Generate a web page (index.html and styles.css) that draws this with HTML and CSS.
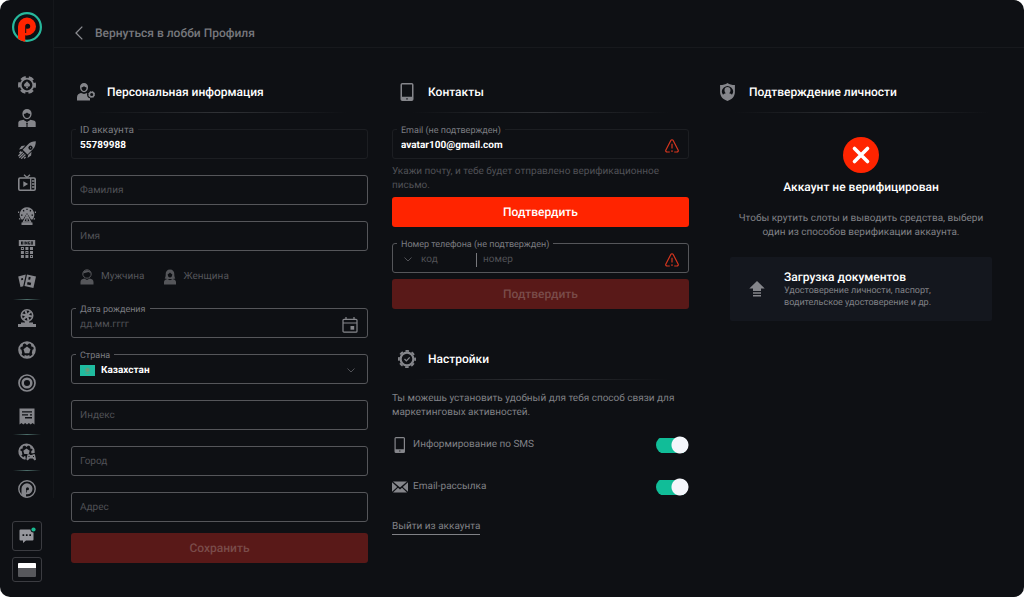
FILE: index.html
```html
<!DOCTYPE html>
<html lang="ru">
<head>
<meta charset="utf-8">
<meta name="viewport" content="width=device-width, initial-scale=1">
<title>Профиль</title>
<link rel="stylesheet" href="styles.css">
</head>
<body>
<div class="app">
  <aside class="sidebar">
    <div class="sidebar-top">
      <a class="logo" href="#" aria-label="Главная">
        <svg viewBox="0 0 30 30" width="30" height="30"><circle cx="15" cy="15" r="13.900" fill="#0e1014" stroke="#27b89c" stroke-width="2.200"/><path fill="#ff2400" fill-rule="evenodd" d="M6 14.500a9 9 0 1 1 9 9q-1 0-1.800-.2V29.800A14.800 14.800 0 0 1 6 26.800zM13.200 21V14.300a2.500 2.500 0 1 1 2.500 2.500q-.8 0-1.500-.4V21z"/></svg>
      </a>
      <nav class="nav" aria-label="Разделы">
        <a href="#" aria-label="Казино"><svg viewBox="0 0 18 18"><circle cx="9" cy="9" r="6.300" class="line" stroke-width="1.800"/><circle cx="9" cy="9" r="7.600" class="line" stroke-width="2.800" stroke-dasharray="5 2.960" stroke-dashoffset="2.500"/><path d="M9 5.200c1 1.400 3 2.300 3 4 0 1.500-1.700 1.900-2.500.9l.6 2.100H7.900l.6-2.100c-.8 1-2.500.6-2.500-.9 0-1.700 2-2.600 3-4z"/></svg></a>
        <a href="#" aria-label="Live-дилеры"><svg viewBox="0 0 18 18"><path fill-rule="evenodd" d="M9 0a4.600 4.600 0 0 1 4.600 4.600C13.600 7.800 11.600 10.300 9 10.300S4.400 7.800 4.400 4.600A4.600 4.600 0 0 1 9 0zM5.800 4.900C6 7.300 7.300 9 9 9s3-1.700 3.200-4.100c-1.300 0-2.400-.5-3.200-1.300-.8.800-1.900 1.300-3.200 1.300z"/><path d="M.3 18v-4.200c0-1.200 1-2 2-2.300l3.300-.8L8.200 13v5zM17.700 18v-4.200c0-1.200-1-2-2-2.300l-3.300-.8L9.800 13v5z"/><path d="M6.600 11.800 9 13l2.400-1.200v3L9 13.600l-2.400 1.200z"/><path d="M8.700 15h.6v3h-.6z"/></svg></a>
        <a href="#" aria-label="Crash-игры"><svg viewBox="0 0 18 18"><path fill-rule="evenodd" d="M17.800.2c.1 3.300-.9 6-3 8.100L9.500 13.500 4.700 8.700 9.900 3.400C12 1.300 14.600.2 17.800.2zM11 5.200a2.100 2.100 0 1 0 3 3 2.100 2.100 0 0 0-3-3z"/><path d="M7.300 4.600 3.500 5 1 8.500l3.200-.7zM13.500 10.800l-.4 3.700L9.500 17l.8-3.300zM12 6.200h1v1h-1z"/><path class="line" stroke-width="1.300" d="m4.600 10.800-4.200 4.300M6 12.100l-4.700 4.700M7.400 13.500l-4.200 4.200M3 10.500l-1.500 1.500M7.600 16l-1.500 1.500"/></svg></a>
        <a href="#" aria-label="TV-игры"><svg viewBox="0 0 18 18"><rect x=".8" y="4" width="16.400" height="12.200" rx="1.200" class="line" stroke-width="1.600"/><path class="line" stroke-width="1.300" d="M6 .8 9 3.500l3-2.700M12.700 4v12M14 7h2.500M14 10h2.500M14 13h2.500"/><path d="m5.300 7.200 4.800 2.900-4.800 2.900z"/></svg></a>
        <a href="#" aria-label="Колесо"><svg viewBox="0 0 18 18"><path fill-rule="evenodd" d="M9 .3a7.300 7.300 0 0 1 5.200 12.400l-1.400-.4L9 6l-3.800 6.300-1.400.4A7.300 7.300 0 0 1 9 .3zM8.400 1.700v1.400h1.200V1.700zM4.700 3.500l.9 1.300 1-.7-.9-1.300zM12.300 2.800l-.9 1.300 1 .7.900-1.300zM3 7.500v1.200h1.500V7.500zM13.500 7.500v1.200H15V7.500z"/><path class="line" stroke-width="1.400" d="M9 7.800 5.400 15h7.200zM9 10v4"/><path d="M3.500 15.500h11V18h-11zM0 4.500h1.200v1.400H0zM16.800 4.500H18v1.400h-1.200zM.8 11.500l1.200-.5.6 1.200-1.200.5zM17.200 11.500 16 11l-.6 1.200 1.200.5z"/></svg></a>
        <a href="#" aria-label="Бинго"><svg viewBox="0 0 18 18"><path fill-rule="evenodd" d="M.8 0h16.400v5.900H.8zM3 1.600v2.800h1.900V3.300h-.6v-.6h.6V1.600zM5.700 1.600v2.800h.8V1.600zM7.200 1.600v2.800h.7V2.900l.9 1.500h.7V1.600h-.7V3l-.8-1.400zM10.200 1.600v2.800h2V3h-.8v.7H11V2.300h1.200v-.7zM12.900 1.600v2.800H15V1.600zM13.600 2.300h.7v1.400h-.7z"/><path fill-rule="evenodd" d="M2.900 7h3v3h-3zM7.400 7h3v3h-3zM12 7h3v3h-3zM2.900 11h3v3h-3zM7.400 11h3v3h-3zM12 11h3v3h-3zM2.900 15h3v3h-3zM7.400 15h3v3h-3zM12 15h3v3h-3zM3.800 7.900v1.200H5V7.900zM8.300 11.900v1.200h1.200v-1.200zM12.900 15.900v1.200h1.200v-1.200z"/></svg></a>
        <a href="#" aria-label="Карты"><svg viewBox="0 0 18 18"><path fill-rule="evenodd" d="m.2 4.500 7.600-2-2.600 11.700-2.700.7zM3 6.400l.4 1.800 1.800-.5-.4-1.800z"/><path fill-rule="evenodd" d="m9 2.500 9 1.900-2.600 11.500-8.900-1.900zM10.800 4.800l-.6 2.600 1.900.4.600-2.600zM9.600 9.900 9 12.500l3.600.8.600-2.600z"/></svg></a>
        <span class="sep"></span>
        <a href="#" aria-label="Рулетка"><svg viewBox="0 0 18 18"><circle cx="9" cy="6.500" r="5.700" class="line" stroke-width="1.600"/><path class="line" stroke-width="2" d="m9 6.500-1.500-5M9 6.500l3.500-3.800M9 6.500l5 1M9 6.500l1.500 5M9 6.500l-3.500 3.800M9 6.500l-5-1"/><path d="M7 12h4v1.500h4V15h3v3H0v-3h3v-1.500h4z"/></svg></a>
        <a href="#" aria-label="Спорт"><svg viewBox="0 0 18 18"><circle cx="9" cy="9" r="7.900" class="line" stroke-width="1.800"/><path d="m9 5.600 3.500 2.600-1.300 4.100H6.800L5.500 8.200zM6 1.500h6L9 4.200zM1 7.400l2.500 1.400.7 3.500L2.500 14zM17 7.400l-2.500 1.400-.7 3.500 1.700 1.700zM6 17l.7-3 2.300.7 2.300-.7.7 3zM3 3l2-.4-.3 3L2 6zM15 3l-2-.4.3 3L16 6z"/></svg></a>
        <a href="#" aria-label="Live-ставки"><svg viewBox="0 0 18 18"><circle cx="9" cy="9" r="8" class="line" stroke-width="1.700"/><circle cx="9" cy="9" r="4.300" class="line" stroke-width="2.500"/></svg></a>
        <a href="#" aria-label="Результаты"><svg viewBox="0 0 18 18"><path fill-rule="evenodd" d="M1.500 1.600h15v15.800l-2-1.300-1.800 1.300-1.800-1.300L9 17.400l-1.800-1.300-1.900 1.300-1.800-1.300-2 1.300zM4 4.300v1.300h10V4.300zM4 7.200v1.300h6V7.200zM12 7.200v1.300h2V7.200zM7 10.100v1.300h7v-1.300z"/></svg></a>
        <span class="sep"></span>
        <a href="#" aria-label="Киберспорт"><svg viewBox="0 0 18 18"><path class="line" stroke-width="1.700" d="M7.500 15.900a7.300 7.300 0 1 1 8.300-7.300v1.300"/><path d="m8.500 5.500 3.200 2.300-1 3.200H6.300L5.300 7.800zM6 1.500h5L8.500 3.900zM1.500 7l2.300 1.300.6 3.100L2.500 13zM15.800 6.500l-2.500 1.500v2.200h2.400zM5 15.500l1-2.200h1.500v2.500zM3 3.200l1.700-.6v2.800L2.200 6zM14 3.200l-1.700-.6v2.800l2.500.6z"/><path fill-rule="evenodd" d="M9.500 11.200h2l.7.900h2l.7-.9h2l1.100 5.300-1.300.9-1.900-1.900h-3.200l-1.900 1.900-1.300-.9zM10.500 13.100v1h1v-1zM15 13.100v1h1v-1z"/></svg></a>
        <span class="sep"></span>
        <a href="#" aria-label="О компании"><svg viewBox="0 0 18 18"><circle cx="9" cy="9" r="8.200" class="line" stroke-width="1.400"/><path fill-rule="evenodd" d="M3.500 8.800a5.500 5.500 0 1 1 5.500 5.500q-.5 0-1-.1v3.300a8 8 0 0 1-4.500-2zM8 12.500V8.700a1.500 1.500 0 1 1 1.500 1.500q-.5 0-.8-.2v2.500z"/></svg></a>
      </nav>
    </div>
    <button class="side-btn chat" type="button" aria-label="Чат"><svg viewBox="0 0 20 18" width="20" height="18"><path fill="#96979d" fill-rule="evenodd" d="M3.500 2.500h13v10q0 1-1 1H9L6 16v-2.500H3.500q-1 0-1-1v-9q0-1 1-1zM5.500 7.300V9h1.700V7.300zM8.900 7.300V9h1.700V7.300zM12.300 7.300V9H14V7.300z"/><circle cx="16.500" cy="2.500" r="3" fill="#0e1014"/><circle cx="16.500" cy="2.500" r="2.100" fill="#19b990"/></svg></button>
    <button class="side-btn panel" type="button" aria-label="Меню"><svg viewBox="0 0 18 14" width="18" height="14"><rect width="18" height="14" rx="1" fill="#57585c"/><path fill="#fff" d="M1 0h16q1 0 1 1v4H0V1q0-1 1-1z"/></svg></button>
  </aside>

  <main class="main">
    <header class="topbar">
      <a class="back" href="#"><svg viewBox="0 0 8 14" width="8" height="14"><path d="M7.300.6 1 7l6.300 6.400" fill="none" stroke="#8b8c91" stroke-width="1.300"/></svg>Вернуться в лобби Профиля</a>
    </header>

    <div class="columns">
      <form class="column">
        <h2 class="head"><svg viewBox="0 0 18 18" width="18" height="18"><path fill-rule="evenodd" d="M7 0a4 4 0 0 1 4 4.300C11 7 9.300 9.200 7 9.200S3 7 3 4.300A4 4 0 0 1 7 0zM4.400 4.500C4.600 6.500 5.600 8 7 8s2.400-1.500 2.600-3.500C8.500 4.400 7.600 4 7 3.300c-.6.700-1.500 1.100-2.600 1.200z"/><path d="M0 17.500v-3.300C0 11.500 2 10.400 4 9.900l3 1 3.200-1c-.7 2.600.4 4.800 2.800 5.300v2.300z"/><circle cx="14.700" cy="11.500" r="2.300" class="line" stroke-width="1.500"/><circle cx="14.700" cy="11.500" r="3.100" class="line" stroke-width=".8" stroke-dasharray="1.400 1.030"/></svg>Персональная информация</h2>
        <div class="fields">
          <div class="field quiet"><label for="id">ID аккаунта</label><input id="id" type="text" value="55789988" readonly></div>
          <div class="field"><input type="text" placeholder="Фамилия" aria-label="Фамилия"></div>
          <div class="field"><input type="text" placeholder="Имя" aria-label="Имя"></div>
          <div class="gender">
            <label><input type="radio" name="gender"><svg viewBox="0 0 14 16" width="14" height="16"><circle cx="7" cy="5" r="4.200" class="line" stroke-width="1"/><path d="M3 4.400C4 .2 10 .2 11 4.400L8.500 3z"/><path d="M.5 15.500v-2.600c0-2 1.800-2.800 3.700-3.300L7 11l2.800-1.400c1.900.5 3.700 1.300 3.700 3.300v2.600z"/></svg>Мужчина</label>
            <label><input type="radio" name="gender"><svg viewBox="0 0 14 16" width="14" height="16"><path fill-rule="evenodd" d="M7 .4c3 0 4.300 2.100 4.300 4.700 0 2 .2 3.300 1 4.500l-2.600.5H4.300l-2.600-.5c.8-1.200 1-2.500 1-4.500C2.700 2.500 4 .4 7 .4zM4.700 5.200c.1 2 1 3.300 2.300 3.300s2.200-1.300 2.300-3.300C8.400 5 7.600 4.300 7 3.500c-.6.800-1.400 1.500-2.300 1.700z"/><path d="M1 15.500v-2.600c0-1.700 1.500-2.500 3.300-3L7 11.300l2.700-1.400c1.800.5 3.300 1.300 3.300 3v2.600z"/></svg>Женщина</label>
          </div>
          <div class="field"><label class="small" for="birth">Дата рождения</label><input id="birth" type="text" placeholder="дд.мм.гггг"><button class="icon-btn" type="button" aria-label="Календарь"><svg viewBox="0 0 16 16" width="16" height="16"><rect x="1" y="2.300" width="14" height="12.900" rx="1" class="line" stroke-width="1.200"/><path class="line" stroke-width="1.200" d="M1 6h14M4 0v2.500M12 0v2.500"/><path d="M8.500 9h3.700v3.700H8.500z"/></svg></button></div>
          <div class="field"><label class="small" for="country">Страна</label><svg class="flag" viewBox="0 0 15 11" width="15" height="11"><rect width="15" height="11" fill="#1fbb9f"/><path fill="#669b7a" d="m7.500 2.400.7.9 1.100-.3v1.200l1 .7-1 .6v1.200l-1.100-.1-.7.9-.7-.9-1.100.1V5.500l-1-.6 1-.7V3l1.100.3zM4.500 6.900q3 2.200 6 0-1 2.100-3 2.100t-3-2.100z"/></svg><select id="country"><option>Казахстан</option></select><svg class="chev" viewBox="0 0 8 5" width="8" height="5"><path d="m.5.500 3.500 3.500L7.500.5"/></svg></div>
          <div class="field"><input type="text" placeholder="Индекс" aria-label="Индекс"></div>
          <div class="field"><input type="text" placeholder="Город" aria-label="Город"></div>
          <div class="field"><input type="text" placeholder="Адрес" aria-label="Адрес"></div>
        </div>
        <button class="btn save" type="button" disabled>Сохранить</button>
      </form>

      <div class="column">
        <section>
          <h2 class="head"><svg viewBox="0 0 18 18" width="18" height="18"><path fill-rule="evenodd" d="M4.300 0h9.400Q15.500 0 15.500 1.800v14.400q0 1.800-1.800 1.800H4.300q-1.800 0-1.800-1.800V1.800Q2.500 0 4.300 0zM4 1.500v12.300h10V1.500zM8.300 15.200v1.300h1.400v-1.300z"/></svg>Контакты</h2>
          <div class="field quiet"><label class="small" for="email">Email (не подтвержден)</label><input id="email" type="email" value="avatar100@gmail.com"><svg class="warn" viewBox="0 0 14 14" width="14" height="14"><path d="M4.800 13H2.200C1 13 .4 12 .9 11L5.800 1.500c.5-1 1.900-1 2.400 0L13.100 11c.5 1-.1 2-1.300 2H9.200M7 4.800v4.700M7 11.300v1.700"/></svg></div>
          <p class="hint">Укажи почту, и тебе будет отправлено верификационное письмо.</p>
          <button class="btn" type="button">Подтвердить</button>
          <div class="field phone"><label class="small" for="phone">Номер телефона (не подтвержден)</label><svg class="chev" viewBox="0 0 8 5" width="8" height="5"><path d="m.5.500 3.500 3.500L7.500.5"/></svg><select class="code" aria-label="Код страны"><option>код</option></select><input id="phone" type="tel" placeholder="номер"><svg class="warn" viewBox="0 0 14 14" width="14" height="14"><path d="M4.800 13H2.200C1 13 .4 12 .9 11L5.800 1.500c.5-1 1.900-1 2.400 0L13.100 11c.5 1-.1 2-1.300 2H9.200M7 4.800v4.700M7 11.300v1.700"/></svg></div>
          <button class="btn confirm-phone" type="button" disabled>Подтвердить</button>
        </section>
        <section class="settings">
          <h2 class="head"><svg viewBox="0 0 18 18" width="18" height="18"><circle cx="9" cy="9" r="6.400" class="line" stroke-width="2.200"/><circle cx="9" cy="9" r="8.100" class="line" stroke-width="1.800" stroke-dasharray="3.560 2.800" stroke-dashoffset="1.780"/><path class="line" stroke-width="1.300" d="m6.500 9 1.900 1.900 3.300-3.500"/></svg>Настройки</h2>
          <p class="note">Ты можешь установить удобный для тебя способ связи для маркетинговых активностей.</p>
          <label class="toggle"><svg viewBox="0 0 16 16" width="16" height="16"><path fill-rule="evenodd" d="M4 0h7.500Q13 0 13 1.500v13q0 1.500-1.500 1.500H4q-1.500 0-1.500-1.500v-13Q2.500 0 4 0zM3.700 1.300v11h8.100v-11zM7.200 13.600v1h1.200v-1z"/></svg>Информирование по SMS<input type="checkbox" role="switch" checked></label>
          <label class="toggle"><svg viewBox="0 0 16 16" width="16" height="16"><path d="M1 2.500h14L8 8.600zM0 3.300 5.200 8 0 12.800zM16 3.300 10.800 8l5.200 4.800zM6 8.700l2 1.700 2-1.700 5 4.800H1z"/></svg>Email-рассылка<input type="checkbox" role="switch" checked></label>
          <a class="logout" href="#">Выйти из аккаунта</a>
        </section>
      </div>

      <section class="column">
        <h2 class="head"><svg viewBox="0 0 18 18" width="18" height="18"><path fill-rule="evenodd" d="M8.500 0c2 1.500 4.400 2 7.400 2v7c0 4.500-3 7.500-7.400 9C4.100 16.500 1.100 13.500 1.100 9V2c3 0 5.400-.5 7.400-2zM4 11.800c.7-1 1.700-1.300 2.800-1.600-1-.8-1.300-1.900-1.300-3.100 0-1.800 1.300-3 3-3s3 1.200 3 3c0 1.200-.3 2.300-1.300 3.100 1.100.3 2.100.6 2.800 1.600A5.500 5.500 0 1 0 4 11.800z"/></svg>Подтверждение личности</h2>
        <div class="verify">
          <svg viewBox="0 0 36 36" width="36" height="36"><circle cx="18" cy="18" r="18" fill="#ff2400"/><path d="m11.500 11.500 13 13m0-13-13 13" stroke="#fff" stroke-width="3.600" stroke-linecap="round"/></svg>
          <h3>Аккаунт не верифицирован</h3>
          <p>Чтобы крутить слоты и выводить средства, выбери один из способов верификации аккаунта.</p>
          <button class="upload" type="button">
            <svg viewBox="0 0 16 16" width="16" height="16"><path d="m8 0 7.700 7.500H12v2.600H4V7.500H.3zM4 11.300h8v1.500H4zM4 14h8v1.500H4z"/></svg>
            <span><strong>Загрузка документов</strong>Удостоверение личности, паспорт, водительское удостоверение и др.</span>
          </button>
        </div>
      </section>
    </div>
  </main>
</div>
</body>
</html>
```
FILE: styles.css
```css
:root {
  --bg: #0e1014;
  --icon: #85868b;
  --muted: #808186;
  --faint: #505156;
  --border: #55565a;
  --red: #ff2400;
}

* {
  box-sizing: border-box;
}

body {
  margin: 0;
  background: #fff;
  font: 10px/14px Roboto, sans-serif;
  text-rendering: geometricPrecision;
  color: var(--muted);
}

h2, h3, p {
  margin: 0;
}

a {
  color: inherit;
  text-decoration: none;
}

button, input, select {
  font: inherit;
  text-rendering: inherit;
  color: inherit;
  margin: 0;
  padding: 0;
  border: 0;
  background: none;
}

svg {
  display: block;
  flex: none;
  fill: var(--icon);
}

.line {
  fill: none;
  stroke: var(--icon);
}

.app {
  display: flex;
  min-height: 100vh;
  border-radius: 10px;
  background: var(--bg);
}

.sidebar {
  flex: none;
  width: 54px;
  display: flex;
  flex-direction: column;
  align-items: center;
  padding-bottom: 15px;
}

.sidebar-top {
  flex: 1;
  align-self: stretch;
  display: flex;
  flex-direction: column;
  align-items: center;
  padding-top: 12px;
  margin-bottom: 23px;
  border-right: 1px solid #15171b;
}

.nav {
  flex: 1;
  display: flex;
  flex-direction: column;
  align-items: center;
  justify-content: space-between;
  margin-top: 34px;
}

.nav svg {
  width: 18px;
  height: 18px;
}

.sep {
  width: 28px;
  height: 1px;
  margin: -6px 0;
  background: linear-gradient(90deg, transparent, #4d6f6b, transparent);
}

.side-btn {
  width: 30px;
  height: 30px;
  display: grid;
  place-items: center;
  border: 1px solid #3b3c41;
  border-radius: 3px;
}

.panel {
  height: 25px;
  margin-top: 6px;
}

.main {
  flex: 1;
  min-width: 0;
}

.topbar {
  height: 48px;
  padding: 18px 21px 0;
  border-bottom: 1px solid #17191d;
}

.back {
  display: inline-flex;
  align-items: center;
  gap: 12px;
  font-size: 12px;
  line-height: 30px;
  font-weight: 500;
  color: #77787d;
}

.columns {
  display: grid;
  grid-template-columns: repeat(3, minmax(0, 1fr));
  gap: 24px;
  padding: 34px 14px 34px 17px;
}

.head {
  display: flex;
  align-items: center;
  gap: 12px;
  height: 31px;
  padding: 0 0 11px 6px;
  margin-bottom: 16px;
  font-size: 12px;
  line-height: 20px;
  font-weight: 500;
  color: #fff;
  background: linear-gradient(90deg, transparent, #303236, transparent) center bottom / 86% 1px no-repeat;
}

.fields {
  display: flex;
  flex-direction: column;
  gap: 16px;
}

.field {
  position: relative;
  display: flex;
  align-items: center;
  height: 30px;
  padding: 0 9px 0 8px;
  border: 1px solid var(--border);
  border-radius: 3px;
}

.quiet {
  border-color: #1c1e22;
}

.field label {
  position: absolute;
  top: -6px;
  left: 4px;
  padding: 0 4px;
  font-size: 10px;
  line-height: 14px;
  color: #7b7c81;
  background: var(--bg);
}

.field label.small {
  font-size: 9px;
}

.field input,
.field select {
  flex: 1;
  min-width: 0;
  height: 28px;
  outline: 0;
  appearance: none;
}

.field label + input {
  padding-top: 3px;
}

.field select {
  padding: 3px 0 0;
  font-weight: 700;
  color: #fff;
}

.quiet input {
  font-weight: 700;
  color: #fff;
}

.field input::placeholder {
  color: var(--faint);
  opacity: 1;
}

.icon-btn {
  padding-top: 3px;
}

.flag {
  margin: 3px 6px 0 0;
}

.chev {
  fill: none;
  stroke: var(--faint);
  margin: 3px 3px 0;
}

.warn {
  fill: none;
  stroke: #d5361f;
  stroke-width: 1.2;
  margin-top: 3px;
}

.phone .chev {
  margin-right: 9px;
}

.field .code {
  flex: none;
  width: 55px;
  font-weight: 400;
  color: var(--faint);
}

.phone input {
  height: 14px;
  margin-top: 3px;
  padding-left: 6px;
  border-left: 1px solid #77787c;
}

.field.phone input {
  height: 14px;
}

.gender {
  display: flex;
  gap: 18px;
  height: 25px;
  align-items: flex-start;
  padding: 2px 0 0 9px;
  color: #54555a;
}

.gender label {
  display: flex;
  align-items: center;
  gap: 7px;
}

.gender input {
  position: absolute;
  opacity: 0;
}

.gender svg {
  --icon: #55565a;
}

.btn {
  display: block;
  width: 100%;
  height: 30px;
  border-radius: 3px;
  background: var(--red);
  font-size: 12px;
  font-weight: 500;
  color: #fff;
}

.btn:disabled {
  background: #591918;
  color: #7a4c4a;
}

.save {
  margin-top: 11px;
}

.hint {
  margin: 6px 0 4px;
  line-height: 14px;
  color: var(--faint);
}

.phone {
  margin-top: 16px;
}

.confirm-phone {
  margin-top: 6px;
}

.settings {
  margin-top: 40px;
}

.settings .head {
  margin-bottom: 12px;
}

.note {
  margin-bottom: 14px;
  line-height: 14px;
}

.toggle {
  display: flex;
  align-items: center;
  gap: 5px;
  height: 22px;
  margin-bottom: 20px;
}

.toggle input {
  appearance: none;
  width: 33px;
  height: 18px;
  margin-left: auto;
  border-radius: 9px;
  background:
    radial-gradient(circle at 24px 9px, #f4f6fb 8px, transparent 9px),
    linear-gradient(#11bd98, #11bd98) left center / 28px 15px no-repeat;
}

.logout {
  display: inline-block;
  margin-top: 2px;
  border-bottom: 1px solid currentColor;
}

.verify {
  display: flex;
  flex-direction: column;
  align-items: center;
  padding: 8px 18px 0 17px;
  text-align: center;
}

.verify h3 {
  margin: 6px 0 17px;
  font-size: 12px;
  line-height: 16px;
  font-weight: 500;
  color: #fff;
}

.upload {
  align-self: stretch;
  display: flex;
  align-items: center;
  gap: 19px;
  margin-top: 17px;
  padding: 12px 19px 12px;
  border-radius: 2px;
  background: #14171e;
  text-align: left;
  font-size: 9px;
  line-height: 12px;
}

.upload span {
  max-width: 170px;
}

.upload strong {
  display: block;
  font-size: 12px;
  line-height: 16px;
  font-weight: 500;
  color: #fff;
}
```
